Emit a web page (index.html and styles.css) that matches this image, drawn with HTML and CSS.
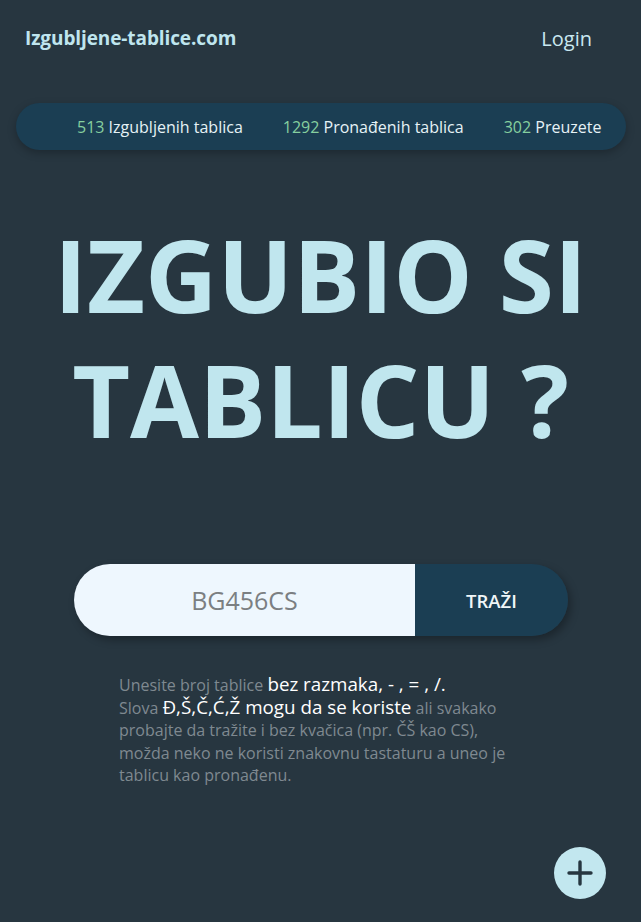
FILE: index.html
```html
<!DOCTYPE html>
<html lang="sr">
<head>
<meta charset="utf-8">
<title>Izgubljene-tablice.com</title>
<link rel="stylesheet" href="styles.css">
</head>
<body>
<div class="page">
  <header class="topbar">
    <a class="brand" href="#">Izgubljene-tablice.com</a>
    <a class="login" href="#">Login</a>
  </header>
  <div class="stats">
    <span class="stat"><span class="num">513</span> Izgubljenih tablica</span>
    <span class="stat"><span class="num">1292</span> Pronađenih tablica</span>
    <span class="stat"><span class="num">302</span> Preuzete</span>
  </div>
  <h1 class="hero">IZGUBIO SI<br>TABLICU ?</h1>
  <form class="search">
    <input class="search-input" type="text" placeholder="BG456CS">
    <button class="search-btn" type="button">TRAŽI</button>
  </form>
  <p class="help">Unesite broj tablice <span class="hl">bez razmaka, - , = , /.</span><br>Slova <span class="hl">Đ,Š,Č,Ć,Ž mogu da se koriste</span> ali svakako probajte da tražite i bez kvačica (npr. ČŠ kao CS), možda neko ne koristi znakovnu tastaturu a uneo je tablicu kao pronađenu.</p>
  <button class="fab" type="button" aria-label="Dodaj">
    <svg width="28" height="28" viewBox="0 0 28 28"><path d="M14 3v22M3 14h22" stroke="#263640" stroke-width="3.4" stroke-linecap="round"/></svg>
  </button>
</div>
</body>
</html>
```
FILE: styles.css
```css
* { box-sizing: border-box; }
html, body { margin: 0; padding: 0; }
body {
  background: #273640;
  font-family: "Open Sans", "Noto Sans", sans-serif;
  height: 922px;
  overflow: hidden;
}
.page { position: relative; height: 922px; }
.topbar {
  display: flex;
  justify-content: space-between;
  align-items: center;
  padding: 24px 49px 0 25px;
  height: 52px;
}
.brand {
  color: #bfe5ee;
  font-weight: 700;
  font-size: 19px;
  text-decoration: none;
  letter-spacing: -0.1px;
}
.login {
  color: #c9e8f0;
  font-size: 20px;
  text-decoration: none;
}
.stats {
  margin: 51px 15px 0 16px;
  height: 47px;
  border-radius: 24px;
  background: #1b3e53;
  box-shadow: 0 3px 8px rgba(0,0,0,0.25);
  display: flex;
  align-items: center;
  gap: 40px;
  padding-left: 61px;
  color: #e6f2f6;
  font-size: 16px;
  white-space: nowrap;
}
.num { color: #86cf9f; }
.hero {
  margin: 62px 0 0;
  text-align: center;
  color: #c0e6ee;
  font-size: 100px;
  font-weight: 700;
  line-height: 125px;
  letter-spacing: 0;
}
.search {
  display: flex;
  margin: 102px 0 0 74px;
  width: 494px;
  height: 72px;
  border-radius: 36px;
  overflow: hidden;
  box-shadow: 3px 4px 8px rgba(0,0,0,0.3);
}
.search-input {
  width: 341px;
  border: none;
  outline: none;
  background: #eef7fe;
  font-family: inherit;
  font-size: 25px;
  text-align: center;
  padding: 0;
  color: #555;
}
.search-input::placeholder { color: #7b7f82; }
.search-btn {
  flex: 1;
  border: none;
  background: #1b3e53;
  color: #f0f6f8;
  font-family: inherit;
  font-size: 18.5px;
  font-weight: 600;
  padding: 0;
}
.help {
  margin: 38px 0 0 119px;
  width: 400px;
  font-size: 16px;
  line-height: 22.5px;
  color: #7f8990;
}
.hl { color: #ffffff; font-size: 18.8px; line-height: 20px; }
.fab {
  position: absolute;
  left: 554px;
  top: 847px;
  width: 52px;
  height: 52px;
  border-radius: 50%;
  border: none;
  background: #c2e7ef;
  display: flex;
  align-items: center;
  justify-content: center;
  padding: 0;
}
```
